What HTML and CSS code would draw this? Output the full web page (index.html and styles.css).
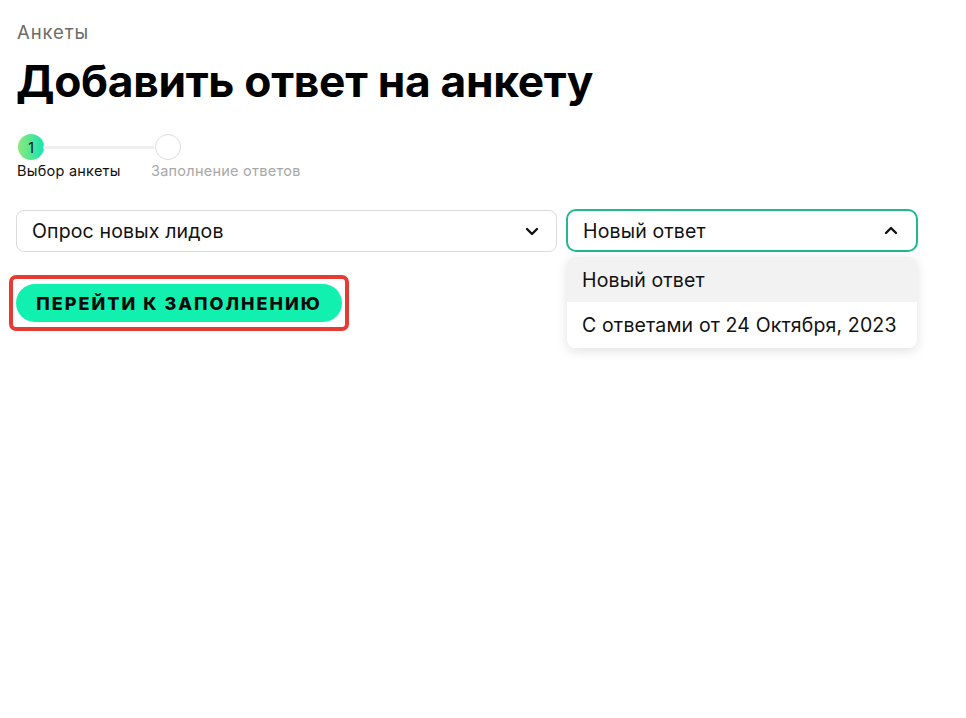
FILE: index.html
```html
<!DOCTYPE html>
<html lang="ru">
<head>
<meta charset="utf-8">
<title>Добавить ответ на анкету</title>
<link rel="stylesheet" href="styles.css">
</head>
<body>
<div class="page">
  <div class="crumb">Анкеты</div>
  <h1 class="title">Добавить ответ на анкету</h1>
  <div class="stepper">
    <div class="step step-active">
      <div class="dot dot-active">1</div>
      <div class="step-label">Выбор анкеты</div>
    </div>
    <div class="line"></div>
    <div class="step step-next">
      <div class="dot dot-empty"></div>
      <div class="step-label label-muted">Заполнение ответов</div>
    </div>
  </div>
  <div class="selects">
    <div class="select select-left">
      <span class="select-text">Опрос новых лидов</span>
      <svg class="chev" width="14" height="9" viewBox="0 0 14 9"><path d="M2 2l5 5 5-5" fill="none" stroke="#111" stroke-width="2.4" stroke-linecap="round" stroke-linejoin="round"/></svg>
    </div>
    <div class="select-wrap">
      <div class="select select-open">
        <span class="select-text">Новый ответ</span>
        <svg class="chev" width="14" height="9" viewBox="0 0 14 9"><path d="M2 7l5-5 5 5" fill="none" stroke="#111" stroke-width="2.4" stroke-linecap="round" stroke-linejoin="round"/></svg>
      </div>
      <div class="menu">
        <div class="menu-item menu-item-hover">Новый ответ</div>
        <div class="menu-item">С ответами от 24 Октября, 2023</div>
      </div>
    </div>
  </div>
  <div class="highlight">
    <button class="btn">ПЕРЕЙТИ К ЗАПОЛНЕНИЮ</button>
  </div>
</div>
</body>
</html>
```
FILE: styles.css
```css
html, body {
  margin: 0;
  padding: 0;
  background: #fff;
  min-height: 100%;
}
body {
  font-family: Inter, "Noto Sans", sans-serif;
  color: #111;
  min-height: 718px;
}
.page {
  padding: 20px 48px 0 16px;
}
.crumb {
  font-size: 18.5px;
  line-height: 24px;
  color: #6b6b6b;
  margin-left: 1px;
  letter-spacing: 0.9px;
}
.title {
  margin: 9px 0 0 0;
  font-size: 44.3px;
  line-height: 56px;
  font-weight: 700;
  letter-spacing: -0.3px;
  color: #000;
}
.stepper {
  display: flex;
  align-items: flex-start;
  margin-top: 25px;
  margin-left: 1px;
}
.step {
  display: flex;
  flex-direction: column;
  align-items: flex-start;
}
.dot {
  width: 26px;
  height: 26px;
  border-radius: 50%;
  box-sizing: border-box;
  display: flex;
  align-items: center;
  justify-content: center;
  font-size: 14px;
}
.dot-active {
  background: linear-gradient(90deg, #8ee87a 0%, #14e6b0 100%);
  color: #111;
  margin-left: 1px;
}
.dot-empty {
  border: 1.5px solid #dcdcdc;
  background: #fff;
}
.line {
  width: 111px;
  height: 3px;
  background: #efefef;
  margin-top: 12px;
  margin-left: -1px;
}
.step-next {
  margin-left: -3px;
}
.step-next .dot {
  margin-left: 4px;
}
.step-label {
  font-size: 14.5px;
  line-height: 18px;
  margin-top: 2px;
  white-space: nowrap;
  letter-spacing: 0.25px;
}
.step-active .step-label {
  margin-right: -95px;
}
.label-muted {
  color: #a8a8a8;
}
.selects {
  display: flex;
  gap: 9px;
  margin-top: 30px;
}
.select {
  box-sizing: border-box;
  height: 42px;
  border: 1px solid #dadada;
  border-radius: 8px;
  display: flex;
  align-items: center;
  justify-content: space-between;
  padding: 0 17px 0 15px;
  font-size: 19.5px;
  letter-spacing: 0.15px;
  background: #fff;
}
.select-left {
  width: 541px;
}
.select-wrap {
  position: relative;
  width: 352px;
}
.select-open {
  height: 43px;
  margin-top: -1px;
  border: 2px solid #1fba8c;
  border-radius: 10px;
  padding-left: 15px;
  padding-right: 18px;
}
.menu {
  position: absolute;
  left: 1px;
  right: 1px;
  top: 47px;
  background: #fff;
  border-radius: 8px;
  box-shadow: 0 3px 12px rgba(0, 0, 0, 0.12);
  overflow: hidden;
  z-index: 2;
}
.menu-item {
  height: 46px;
  display: flex;
  align-items: center;
  padding-left: 15px;
  font-size: 19.5px;
  letter-spacing: 0.15px;
  color: #111;
}
.menu-item-hover {
  height: 45px;
  background: #f2f2f2;
}
.highlight {
  display: inline-block;
  margin-top: 23px;
  margin-left: -7px;
  border: 4px solid #e53b33;
  border-radius: 7px;
  padding: 5px 3px;
}
.btn {
  display: block;
  height: 38px;
  width: 326px;
  border: none;
  border-radius: 19px;
  background: #12f0b0;
  color: #0a0a0a;
  font-family: Inter, "Noto Sans", sans-serif;
  font-weight: 800;
  font-size: 18px;
  letter-spacing: 2px;
  padding: 0;
  cursor: pointer;
}
```
